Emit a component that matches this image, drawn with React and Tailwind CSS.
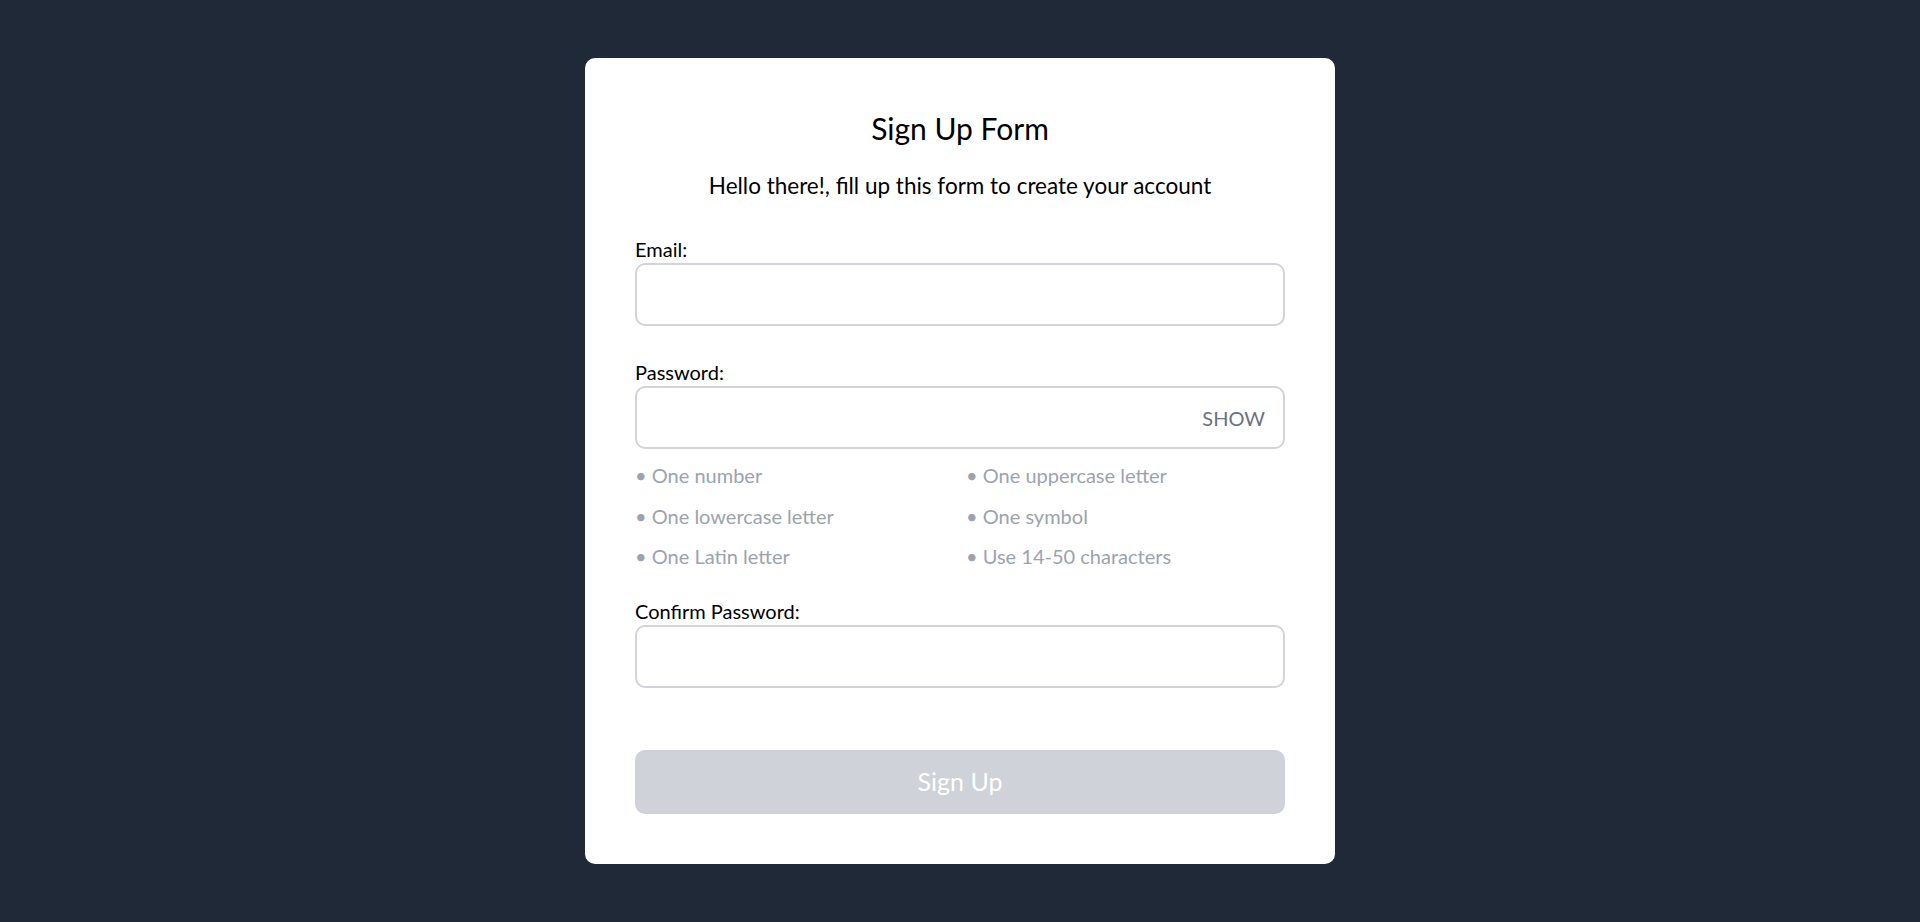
import { useState } from 'react';

const hints = [
  'One number',
  'One uppercase letter',
  'One lowercase letter',
  'One symbol',
  'One Latin letter',
  'Use 14-50 characters',
];

export default function App() {
  const [show, setShow] = useState(false);

  return (
    <div
      className="min-h-screen flex items-center justify-center bg-[#1f2937]"
      style={{ fontFamily: '"Segoe UI", Lato, "Noto Sans", sans-serif' }}
    >
      <div className="w-[750px] bg-white rounded-[10px] p-[50px] text-black">
        <h1 className="text-[30px] leading-[40px] text-center font-normal">Sign Up Form</h1>
        <p className="mt-[23px] text-[22.5px] leading-[30px] text-center">
          Hello there!, fill up this form to create your account
        </p>

        <form onSubmit={(e) => e.preventDefault()} className="mt-[34px] flex flex-col">
          <label className="text-[20px] leading-[28px]">Email:</label>
          <input
            type="email"
            className="h-[63px] w-full border-2 border-[#d1d5db] rounded-[10px] px-5 text-[20px] outline-none"
          />

          <label className="mt-[32px] text-[20px] leading-[28px]">Password:</label>
          <div className="relative">
            <input
              type={show ? 'text' : 'password'}
              className="h-[63px] w-full border-2 border-[#d1d5db] rounded-[10px] pl-5 pr-24 text-[20px] outline-none"
            />
            <button
              type="button"
              onClick={() => setShow(!show)}
              className="absolute right-[20px] top-1/2 -translate-y-1/2 text-[20px] text-[#6b7280]"
            >
              {show ? 'HIDE' : 'SHOW'}
            </button>
          </div>

          <ul className="mt-[13px] grid grid-cols-2 gap-x-3 gap-y-[13.5px] text-[20px] leading-[27px] text-[#9ca3af]">
            {hints.map((h) => (
              <li key={h}>• {h}</li>
            ))}
          </ul>

          <label className="mt-[27px] text-[20px] leading-[28px]">Confirm Password:</label>
          <input
            type="password"
            className="h-[63px] w-full border-2 border-[#d1d5db] rounded-[10px] px-5 text-[20px] outline-none"
          />

          <button
            type="submit"
            disabled
            className="mt-[62px] h-[64px] w-full rounded-[10px] bg-[#cfd2d9] text-white text-[25px]"
          >
            Sign Up
          </button>
        </form>
      </div>
    </div>
  );
}
